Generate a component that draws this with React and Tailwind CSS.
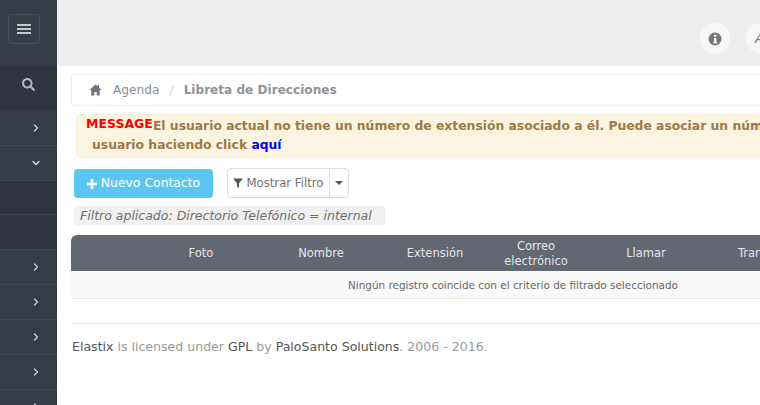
import React from "react";
import { ChevronRight, ChevronDown } from "lucide-react";

const Search = () => (
  <svg width="13" height="13" viewBox="0 0 512 512" fill="#aeb6c0"><path d="M505 442.700L405.300 343c-4.500-4.500-10.600-7-17-7H372c27.600-35.300 44-79.700 44-128C416 93.100 322.900 0 208 0S0 93.100 0 208s93.100 208 208 208c48.300 0 92.700-16.400 128-44v16.300c0 6.400 2.500 12.500 7 17l99.700 99.700c9.400 9.400 24.600 9.400 33.900 0l28.300-28.300c9.400-9.400 9.400-24.600.1-34zM208 336c-70.700 0-128-57.200-128-128 0-70.700 57.200-128 128-128 70.700 0 128 57.200 128 128 0 70.700-57.200 128-128 128z"/></svg>
);

const Row = ({ h, kind, dark }) => (
  <div className={`flex items-center justify-end pr-[15px] border-b border-[#3f4651] ${h} ${dark ? "bg-[#2f343e]" : "bg-[#363c46]"}`}>
    {kind === "r" && <ChevronRight size={12} strokeWidth={2.750} className="text-[#c5d0dc]" />}
    {kind === "d" && <ChevronDown size={12} strokeWidth={2.750} className="text-[#d5dde6]" />}
  </div>
);

export default function App() {
  return (
    <div className="flex w-[760px] h-[405px] overflow-hidden bg-white text-[12.200px] font-['DejaVu_Sans','Liberation_Sans',sans-serif]">
      <aside className="w-[57px] shrink-0 bg-[#363c46] flex flex-col">
        <div className="h-[66px] shrink-0 pl-[8px] pt-[14px]">
          <div className="w-[32px] h-[30px] border border-[#474e5a] rounded-[4px] flex flex-col items-center justify-center gap-[2px]">
            <span className="block w-[14px] h-[2px] bg-[#c4c9d0]" />
            <span className="block w-[14px] h-[2px] bg-[#c4c9d0]" />
            <span className="block w-[14px] h-[2px] bg-[#c4c9d0]" />
          </div>
        </div>
        <div className="h-[44px] shrink-0 bg-[#2f343e] flex items-start pl-[22px] pt-[12px]"><Search /></div>
        <Row h="h-[36px] shrink-0" kind="r" />
        <Row h="h-[35px] shrink-0" kind="d" />
        <Row h="h-[34px] shrink-0" dark />
        <Row h="h-[35px] shrink-0" dark />
        <Row h="h-[35px] shrink-0" kind="r" />
        <Row h="h-[35px] shrink-0" kind="r" />
        <Row h="h-[35px] shrink-0" kind="r" />
        <Row h="h-[35px] shrink-0" kind="r" />
        <Row h="h-[35px] shrink-0" kind="r" />
      </aside>

      <main className="w-[1000px] shrink-0 flex flex-col">
        <header className="h-[66px] shrink-0 bg-[#eeeeee] flex items-start gap-[16px] pl-[643px] pt-[23px]">
          <span className="w-[30px] h-[31px] rounded-full bg-[#f7f7f7] flex items-center justify-center">
            <svg width="14" height="14" viewBox="0 0 14 14"><circle cx="7" cy="7" r="6.500" fill="#777" /><rect x="6" y="6" width="2.400" height="5" fill="#f7f7f7" /><rect x="5.200" y="10" width="4" height="1.300" fill="#f7f7f7" /><rect x="6" y="2.800" width="2.400" height="2" fill="#f7f7f7" /></svg>
          </span>
          <span className="w-[30px] h-[31px] rounded-full bg-[#f7f7f7] flex items-center pl-[9px] text-[#777] italic text-[14px]">A</span>
        </header>

        <div className="pl-[14px] pt-[8px]">
          <nav className="h-[32px] border border-[#eeeeee] rounded-[3px] flex items-center pl-[17px] text-[#8a8f96]">
            <svg width="13" height="12" viewBox="0 0 13 12" fill="#6b7580"><path d="M6.500 0.500L0.500 6h1.800v5.500h3V8h2.400v3.500h3V6h1.800L10 3.500V1H8.500v1.100z" /></svg>
            <span className="ml-[11px]">Agenda</span>
            <span className="mx-[10px] text-[#d0d0d0]">/</span>
            <b className="text-[#8f9399] font-bold text-[12.100px]">Libreta de Direcciones</b>
          </nav>

          <div className="ml-[5px] mt-[8px] h-[44px] w-[900px] bg-[#fbf4e0] border border-[#f8eed6] rounded-[5px] pl-[9px] font-bold text-[12.350px] text-[#9c7a45] leading-[19px]">
            <div className="flex items-start whitespace-nowrap">
              <span className="text-[#ff0000] text-[12.500px] leading-[17px]">MESSAGE</span>
              <span className="mt-[2px]">El usuario actual no tiene un número de extensión asociado a él. Puede asociar un número de extensión a este</span>
            </div>
            <div className="pl-[6px] whitespace-nowrap">usuario haciendo click <a className="text-[#0000ee]">aquí</a></div>
          </div>

          <div className="flex items-center mt-[10px] ml-[3px]">
            <button className="w-[139px] h-[29px] bg-[#5bc7f0] rounded-[4px] text-white text-[12.400px] pt-[1px] flex items-center justify-center gap-[4px]">
              <svg width="10" height="10" viewBox="0 0 10 10" fill="#fff"><path d="M3.700 0h2.600v3.700H10v2.600H6.300V10H3.700V6.300H0V3.700h3.700z" /></svg>
              <span>Nuevo Contacto</span>
            </button>
            <div className="ml-[14px] h-[30px] w-[122px] border border-[#dcdcdc] rounded-[4px] flex items-center text-[11.700px] text-[#6f6f6f]">
              <span className="flex-1 flex items-center justify-center gap-[3px] pt-[1px]">
                <svg width="10" height="10" viewBox="0 0 10 10" fill="#555"><path d="M0 0.500h10L6 5.200V10L4 8.500V5.200z" /></svg>
                Mostrar Filtro
              </span>
              <span className="w-[19px] h-full border-l border-[#dcdcdc] flex items-center justify-center">
                <span className="block w-0 h-0 border-x-[4px] border-x-transparent border-t-[4px] border-t-[#555]" />
              </span>
            </div>
          </div>

          <div className="ml-[3px] mt-[8px] w-[311px] h-[19px] bg-[#f0f0f0] rounded-[4px] pl-[6px] italic text-[12.500px] text-[#6e6e6e] leading-[19px] whitespace-nowrap">
            Filtro aplicado: Directorio Telefónico = internal
          </div>

          <div className="mt-[10px] h-[36px] bg-[#636772] rounded-t-[6px] grid grid-cols-[71px_118px_122px_106px_96px_124px_114px] items-center text-center text-[11.500px] leading-[15px] pt-[1px] text-[#e4e6ea]">
            <span />
            <span>Foto</span>
            <span>Nombre</span>
            <span>Extensión</span>
            <span>Correo<br />electrónico</span>
            <span>Llamar</span>
            <span>Transferir</span>
          </div>
          <div className="h-[28px] bg-[#fafafa] border-b border-[#e5e5e5] text-[10.430px] text-[#666] leading-[28px] pl-[277px] whitespace-nowrap">
            Ningún registro coincide con el criterio de filtrado seleccionado
          </div>

          <div className="mt-[24px] border-t border-[#e8e8e8] pt-[14px] pl-[1px] text-[#999] text-[12.560px] leading-[18px] whitespace-nowrap">
            <span className="text-[#555]">Elastix</span> is licensed under <span className="text-[#555]">GPL</span> by <span className="text-[#555]">PaloSanto Solutions</span>. 2006 - 2016.
          </div>
        </div>
      </main>
    </div>
  );
}
